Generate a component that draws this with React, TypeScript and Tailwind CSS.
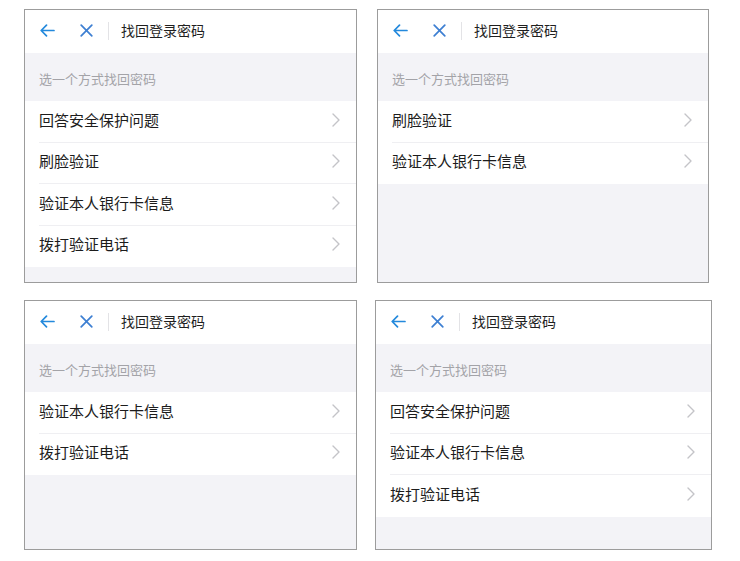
import React from 'react';

const font = { fontFamily: '"Noto Sans CJK SC", "Noto Sans", sans-serif' };

function Chevron() {
  return (
    <svg width="8" height="14" viewBox="0 0 8 14" fill="none" className="shrink-0 -translate-y-[2px]">
      <path d="M1 1l6 6-6 6" stroke="#c4c4c8" strokeWidth="1.4" strokeLinecap="round" strokeLinejoin="round" />
    </svg>
  );
}

function Header() {
  return (
    <div className="flex items-center h-[43px] bg-white pl-[15px] pb-[2px] shrink-0">
      {/* back arrow */}
      <svg width="15" height="13" viewBox="0 0 15 13" fill="none">
        <path d="M14 6.5H1.5M6.5 1.2L1.2 6.5l5.3 5.3" stroke="#2389dc" strokeWidth="1.7" strokeLinecap="round" strokeLinejoin="round" />
      </svg>
      {/* close */}
      <svg width="13" height="13" viewBox="0 0 13 13" fill="none" className="ml-[25px]">
        <path d="M1.2 1.2l10.6 10.6M11.8 1.2L1.2 11.8" stroke="#3d7fd2" strokeWidth="1.7" strokeLinecap="round" />
      </svg>
      <div className="ml-[15px] w-px h-[18px] bg-[#e3e3e6]" />
      <span className="ml-[12px] text-[14px] leading-[18px] text-[#1f1f1f] -translate-y-[1px]">找回登录密码</span>
    </div>
  );
}

function Panel({ items, width, height }: { items: string[]; width: number; height: number }) {
  return (
    <div
      className="flex flex-col border border-[#9c9c9c] bg-[#f3f3f7] overflow-hidden"
      style={{ width, height }}
    >
      <Header />
      <div className="h-[48px] pt-[17px] pl-[14px] shrink-0">
        <span className="block text-[13px] leading-[18px] text-[#a3a3a8]">选一个方式找回密码</span>
      </div>
      <div className="bg-white">
        {items.map((it, i) => (
          <div key={it} className="relative flex items-center justify-between h-[41.5px] pl-[14px] pr-[16px]">
            <span className="text-[15px] leading-[20px] text-[#1c1c1c] -translate-y-[2px]">{it}</span>
            <Chevron />
            {i < items.length - 1 && (
              <div className="absolute left-[14px] right-0 bottom-0 h-px bg-[#efeff2]" />
            )}
          </div>
        ))}
      </div>
    </div>
  );
}

export default function App() {
  return (
    <div className="w-[740px] h-[561px] bg-white pt-[9px]" style={font}>
      <div className="flex pl-[24px] gap-[20px]">
        <Panel width={333} height={274} items={['回答安全保护问题', '刷脸验证', '验证本人银行卡信息', '拨打验证电话']} />
        <Panel width={332} height={274} items={['刷脸验证', '验证本人银行卡信息']} />
      </div>
      <div className="flex pl-[24px] gap-[18px] mt-[17px]">
        <Panel width={333} height={250} items={['验证本人银行卡信息', '拨打验证电话']} />
        <Panel width={337} height={250} items={['回答安全保护问题', '验证本人银行卡信息', '拨打验证电话']} />
      </div>
    </div>
  );
}
